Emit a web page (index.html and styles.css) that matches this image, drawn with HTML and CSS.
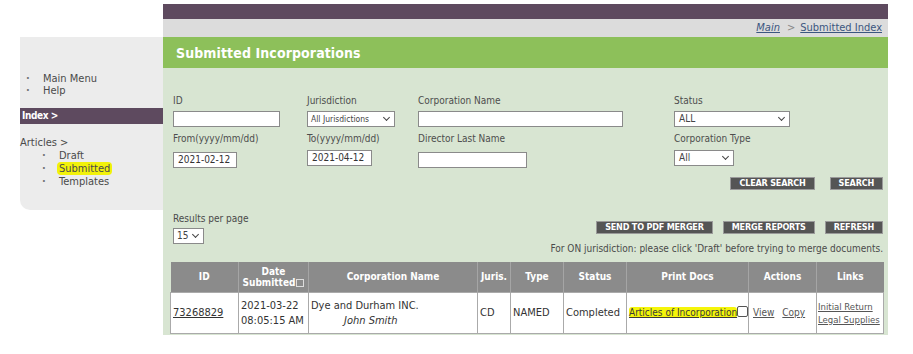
FILE: index.html
```html
<!DOCTYPE html>
<html>
<head>
<meta charset="utf-8">
<link rel="stylesheet" href="styles.css">
</head>
<body>
<div class="page">
  <aside class="sidebar">
    <ul class="menu">
      <li><span class="dot">·</span>Main Menu</li>
      <li><span class="dot">·</span>Help</li>
    </ul>
    <div class="index-bar">Index &gt;</div>
    <div class="articles">Articles &gt;</div>
    <ul class="submenu">
      <li><span class="dot">·</span>Draft</li>
      <li><span class="dot">·</span><span class="hl">Submitted</span></li>
      <li><span class="dot">·</span>Templates</li>
    </ul>
  </aside>
  <main class="main">
    <div class="topbar"></div>
    <div class="crumbs"><a href="#">Main</a><span class="sep">&gt;</span><a href="#">Submitted Index</a></div>
    <h1 class="title">Submitted Incorporations</h1>
    <div class="panel">
      <div class="form-grid">
        <div class="field"><label>ID</label><input class="in in-id" type="text"></div>
        <div class="field"><label>Jurisdiction</label><div class="sel sel-jur">All Jurisdictions<span class="chev"></span></div></div>
        <div class="field"><label>Corporation Name</label><input class="in in-name" type="text"></div>
        <div class="field"><label>Status</label><div class="sel sel-status">ALL<span class="chev"></span></div></div>
        <div class="field r2"><label>From(yyyy/mm/dd)</label><div class="in in-date">2021-02-12</div></div>
        <div class="field r2"><label>To(yyyy/mm/dd)</label><div class="in in-date in-to">2021-04-12</div></div>
        <div class="field r2"><label>Director Last Name</label><input class="in in-dir" type="text"></div>
        <div class="field r2"><label>Corporation Type</label><div class="sel sel-type">All<span class="chev"></span></div></div>
      </div>
      <div class="btn-row search-row">
        <span class="btn">CLEAR SEARCH</span>
        <span class="btn btn-search">SEARCH</span>
      </div>
      <div class="results-row">
        <div class="rpp">
          <label>Results per page</label>
          <div class="sel sel-rpp">15<span class="chev"></span></div>
        </div>
        <div class="right-tools">
          <div class="btn-row">
            <span class="btn">SEND TO PDF MERGER</span>
            <span class="btn">MERGE REPORTS</span>
            <span class="btn btn-refresh">REFRESH</span>
          </div>
          <p class="note">For ON jurisdiction: please click 'Draft' before trying to merge documents.</p>
        </div>
      </div>
      <table class="grid">
        <colgroup>
          <col class="c-id"><col class="c-date"><col class="c-corp"><col class="c-juris"><col class="c-type"><col class="c-status"><col class="c-print"><col class="c-actions"><col class="c-links">
        </colgroup>
        <thead>
          <tr>
            <th>ID</th>
            <th>Date<br>Submitted<span class="sort"></span></th>
            <th>Corporation Name</th>
            <th>Juris.</th>
            <th>Type</th>
            <th>Status</th>
            <th>Print Docs</th>
            <th>Actions</th>
            <th>Links</th>
          </tr>
        </thead>
        <tbody>
          <tr>
            <td><a href="#">73268829</a></td>
            <td class="date">2021-03-22<br>08:05:15 AM</td>
            <td class="corp">Dye and Durham INC.<br><em>John Smith</em></td>
            <td>CD</td>
            <td class="type">NAMED</td>
            <td>Completed</td>
            <td class="print"><a href="#" class="hl-link">Articles of Incorporation</a><span class="cb"></span></td>
            <td class="actions"><a href="#">View</a><a href="#">Copy</a></td>
            <td class="links"><a href="#">Initial Return</a><br><a href="#">Legal Supplies</a></td>
          </tr>
        </tbody>
      </table>
    </div>
  </main>
</div>
</body>
</html>
```

FILE: styles.css
```css
* { box-sizing: border-box; }
html, body { margin: 0; padding: 0; background: #fff; }
body {
  font-family: "DejaVu Sans Condensed", "DejaVu Sans", sans-serif;
  font-size: 10px;
  color: #4a4a4a;
}
.page {
  display: flex;
  align-items: flex-start;
  padding: 4px 0 0 20px;
}
.sidebar {
  width: 143px;
  height: 173px;
  margin-top: 33px;
  background: #ececec;
  border-bottom-left-radius: 10px;
  padding-top: 36px;
  font-size: 11px;
  color: #4a4a4a;
}
.menu, .submenu { list-style: none; margin: 0; padding: 0; }
.menu li { line-height: 12px; padding-left: 6px; }
.dot { display: inline-block; width: 17px; font-weight: bold; color: #777; }
.index-bar {
  margin-top: 11px;
  height: 16px;
  background: #5e4a5f;
  color: #fff;
  font-weight: bold;
  font-size: 10px;
  line-height: 16px;
  padding-left: 2px;
  letter-spacing: -0.4px;
}
.articles { margin-top: 12px; line-height: 13px; }
.submenu li { line-height: 13px; padding-left: 22px; }
.hl {
  background: #f2f20a;
  border-radius: 4px;
  padding: 0 2px;
  margin-left: -2px;
}
.main { width: 725px; }
.topbar { height: 15px; background: #5e4a5f; }
.crumbs {
  height: 18px;
  background: #dcdcdc;
  text-align: right;
  padding-right: 6px;
  line-height: 18px;
  font-size: 11px;
}
.crumbs a { color: #3b5680; }
.crumbs a:first-child { font-style: italic; }
.crumbs .sep { color: #888; margin: 0 5px 0 7px; }
.title {
  margin: 0;
  height: 31px;
  background: #8dc05a;
  color: #fff;
  font-size: 14px;
  font-weight: bold;
  line-height: 32px;
  padding-left: 13px;
  letter-spacing: 0.1px;
}
.panel {
  background: #d8e5d2;
  padding: 27px 5px 1px 7px;
}
.form-grid {
  display: grid;
  grid-template-columns: 134px 111px 256px 1fr;
  row-gap: 6px;
  padding-left: 3px;
}
.field label { display: block; line-height: 12px; margin-bottom: 4px; color: #4d4d4d; }
.field.r2 label { margin-bottom: 7px; }
.in {
  display: block;
  height: 16px;
  border: 1px solid #8a8a8a;
  background: #fff;
  font: inherit;
  padding: 0 4px;
  line-height: 14px;
  color: #333;
}
.in-id { width: 107px; }
.in-name { width: 205px; }
.in-dir { width: 109px; }
.in-date { width: 64px; }
.in-to { margin-top: -2px; width: 65px; }
.sel {
  position: relative;
  height: 16px;
  border: 1px solid #8a8a8a;
  background: #fff;
  line-height: 14px;
  padding-left: 4px;
  color: #444;
}
.chev {
  position: absolute;
  right: 5px;
  top: 3px;
  width: 5px;
  height: 5px;
  border-right: 1.5px solid #444;
  border-bottom: 1.5px solid #444;
  transform: rotate(45deg);
}
.sel-jur { width: 88px; font-size: 8.5px; padding-left: 3px; }
.sel-status { width: 116px; }
.sel-type { width: 60px; margin-top: -2px; }
.sel-rpp { width: 31px; padding-left: 3px; }
.btn-row { display: flex; justify-content: flex-end; gap: 15px; }
.search-row { margin-top: 9px; }
.btn {
  display: inline-block;
  height: 13px;
  background: #555;
  border: 1px solid #9a9a9a;
  color: #fff;
  font-weight: bold;
  font-size: 9px;
  line-height: 11px;
  padding: 0 8px;
  letter-spacing: -0.2px;
}
.results-row {
  display: flex;
  justify-content: space-between;
  align-items: flex-start;
  margin-top: 23px;
  padding-left: 3px;
}
.rpp label { display: block; line-height: 12px; margin-bottom: 3px; }
.right-tools { display: flex; flex-direction: column; align-items: flex-end; padding-top: 8px; }
.right-tools .btn-row { gap: 10px; }
.note { margin: 9px 0 0; line-height: 12px; }
.grid {
  margin-top: 7px;
  width: 713px;
  border-collapse: collapse;
  table-layout: fixed;
}
.c-id { width: 68px; }
.c-date { width: 70px; }
.c-corp { width: 169px; }
.c-juris { width: 33px; }
.c-type { width: 53px; }
.c-status { width: 63px; }
.c-print { width: 122px; }
.c-actions { width: 68px; }
.c-links { width: 67px; }
.grid th {
  background: #8b8b8b;
  color: #fff;
  font-weight: bold;
  height: 30px;
  border-left: 1px solid #a5a5a5;
  line-height: 11px;
  padding: 0;
}
.grid th:first-child { border-left: none; }
.sort {
  display: inline-block;
  width: 8px;
  height: 8px;
  border: 1px solid #ddd;
  margin-left: 1px;
  vertical-align: -1px;
}
.grid td {
  background: #fff;
  height: 41px;
  border: 1px solid #aaa;
  padding: 0 2px;
  font-size: 11px;
  color: #333;
  line-height: 15px;
}
.grid td a { color: #333; }
.corp em { display: inline-block; padding-left: 33px; }
.type { font-size: 10px; }
.print { white-space: nowrap; }
.hl-link {
  background: #f5f50a;
  border-radius: 3px;
  font-size: 10px;
}
.grid td .hl-link { color: #3a3a3a; }
.cb {
  display: inline-block;
  width: 11px;
  height: 11px;
  border: 1px solid #555;
  border-radius: 2px;
  vertical-align: -1px;
  background: #fff;
}
.actions a { margin-left: 2px; margin-right: 6px; font-size: 10px; }
.grid td.actions a { color: #555; }
.grid td.links { font-size: 9.5px; line-height: 13px; white-space: nowrap; padding: 0 1px; }
.grid td.links a { color: #555; }
```
